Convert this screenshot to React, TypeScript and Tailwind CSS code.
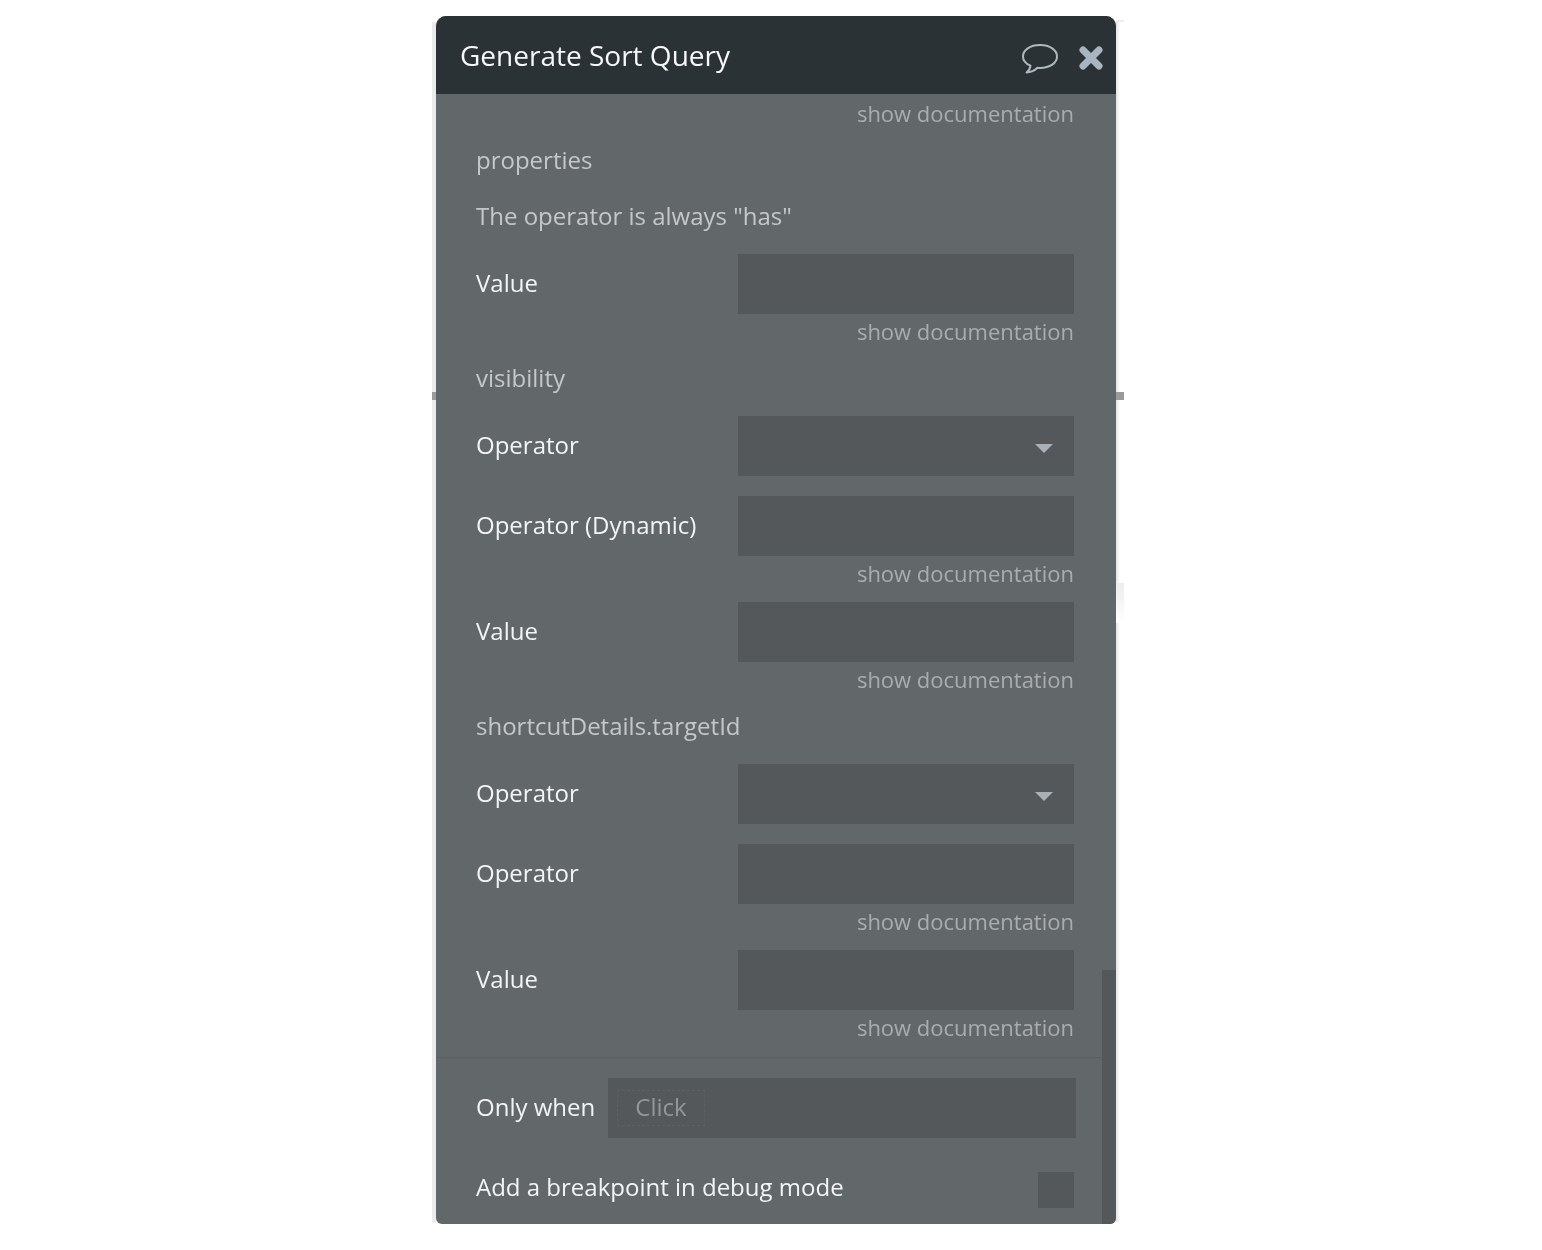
import React from "react";

const font = "font-['Open_Sans','Liberation_Sans',sans-serif]";

function Doc({ className = "" }: { className?: string }) {
  return (
    <div className={`flex h-[28px] items-center justify-end pb-[2px] text-[22px] leading-none text-[#a9adb0] ${className}`}>
      show documentation
    </div>
  );
}

function Heading({ text, className = "" }: { text: string; className?: string }) {
  return (
    <div className={`flex h-[28px] items-center pb-[1px] text-[24px] leading-none text-[#c4c8ca] ${className}`}>
      {text}
    </div>
  );
}

function Field({ label, dropdown, className = "" }: { label: string; dropdown?: boolean; className?: string }) {
  return (
    <div className={`flex h-[60px] items-center ${className}`}>
      <div className="w-[262px] shrink-0 whitespace-nowrap pb-[2px] text-[24px] leading-none text-[#f2f4f5]">{label}</div>
      <div className="flex h-[60px] w-[336px] items-center justify-end bg-[#54585a] pr-[21px]">
        {dropdown && (
          <svg width="18" height="9" viewBox="0 0 18 9" className="mt-[5px]">
            <path d="M0 0h18L9 9z" fill="#a9b1b8" />
          </svg>
        )}
      </div>
    </div>
  );
}

export default function App() {
  return (
    <div className={`relative h-[1250px] w-[1542px] overflow-hidden bg-white blur-[0.5px] ${font}`}>
      {/* bits of the page behind the popup */}
      <div className="absolute left-[432px] top-[22px] h-[1200px] w-[4px] bg-[#ebebeb]" />
      <div className="absolute left-[1116px] top-[20px] h-[1202px] w-[4px] bg-gradient-to-r from-[#e4e4e4] to-white" />
      <div className="absolute left-[1116px] top-[20px] h-[2px] w-[8px] bg-[#ececec]" />
      <div className="absolute left-[432px] top-[392px] h-[8px] w-[4px] bg-[#9a9a9a]" />
      <div className="absolute left-[1116px] top-[392px] h-[8px] w-[8px] bg-[#9a9a9a]" />
      <div className="absolute left-[1116px] top-[583px] h-[40px] w-[8px] bg-gradient-to-b from-[#ececec] to-white" />

      <div className="relative ml-[436px] h-[1224px] w-[680px] pt-[16px]">
        <div className="relative h-[1208px] overflow-hidden rounded-t-[10px] rounded-b-[6px] bg-[#62676a]">
          <div className="flex h-[78px] items-center justify-between bg-[#2b3235] pl-[24px] pr-[12px]">
            <div className="pb-[1px] text-[28px] leading-none text-[#f5f7f8]">Generate Sort Query</div>
            <div className="flex items-center gap-[18px] pt-[5px]">
              <svg width="40" height="34" viewBox="0 0 40 34" fill="none" className="mt-[3px]">
                <path
                  d="M20 3C10 3 3 8 3 14.500C3 18.500 6 21.800 10.500 23.700C10.200 26.500 8.500 29 6.500 30.500C11 30.300 15 28.300 17.500 25.800C18.300 25.900 19.200 26 20 26C30 26 37 21 37 14.500C37 8 30 3 20 3Z"
                  stroke="#aeb9bf"
                  strokeWidth="2"
                  strokeLinejoin="round"
                />
              </svg>
              <svg width="26" height="26" viewBox="0 0 26 26" fill="none">
                <path d="M5 5L21 21M21 5L5 21" stroke="#a7b6c1" strokeWidth="7" strokeLinecap="round" />
              </svg>
            </div>
          </div>

          <div className="flex flex-col pl-[40px] pr-[42px]">
            <Doc className="mt-[6px]" />
            <Heading text="properties" className="mt-[18px]" />
            <div className="mt-[28px] flex h-[28px] items-center pb-[1px] text-[24px] leading-none text-[#c4c8ca]">
              The operator is always "has"
            </div>
            <Field label="Value" className="mt-[24px]" />
            <Doc className="mt-[4px]" />
            <Heading text="visibility" className="mt-[18px]" />
            <Field label="Operator" dropdown className="mt-[24px]" />
            <Field label="Operator (Dynamic)" className="mt-[20px]" />
            <Doc className="mt-[4px]" />
            <Field label="Value" className="mt-[14px]" />
            <Doc className="mt-[4px]" />
            <Heading text="shortcutDetails.targetId" className="mt-[18px]" />
            <Field label="Operator" dropdown className="mt-[24px]" />
            <Field label="Operator" className="mt-[20px]" />
            <Doc className="mt-[4px]" />
            <Field label="Value" className="mt-[14px]" />
            <Doc className="mt-[4px]" />
          </div>

          <div className="mt-[15px] border-t border-[#5a5e61] pl-[40px] pr-[40px]">
            <div className="mt-[20px] flex h-[60px] items-center">
              <div className="w-[132px] shrink-0 whitespace-nowrap pb-[2px] text-[24px] leading-none text-[#f2f4f5]">Only when</div>
              <div className="flex h-[60px] flex-1 items-center bg-[#54585a] pl-[9px]">
                <div className="flex h-[36px] w-[88px] items-center justify-center border border-dashed border-[#5c6063] pb-[2px] text-[24px] leading-none text-[#92979a]">
                  Click
                </div>
              </div>
            </div>
            <div className="mt-[34px] flex h-[36px] items-center justify-between pr-[2px]">
              <div className="pb-[6px] text-[24px] leading-none text-[#f2f4f5]">Add a breakpoint in debug mode</div>
              <div className="h-[36px] w-[36px] bg-[#54585a]" />
            </div>
          </div>

          {/* scrollbar thumb */}
          <div className="absolute right-0 top-[954px] h-[254px] w-[14px] bg-[#54585a]" />
        </div>
      </div>
    </div>
  );
}
